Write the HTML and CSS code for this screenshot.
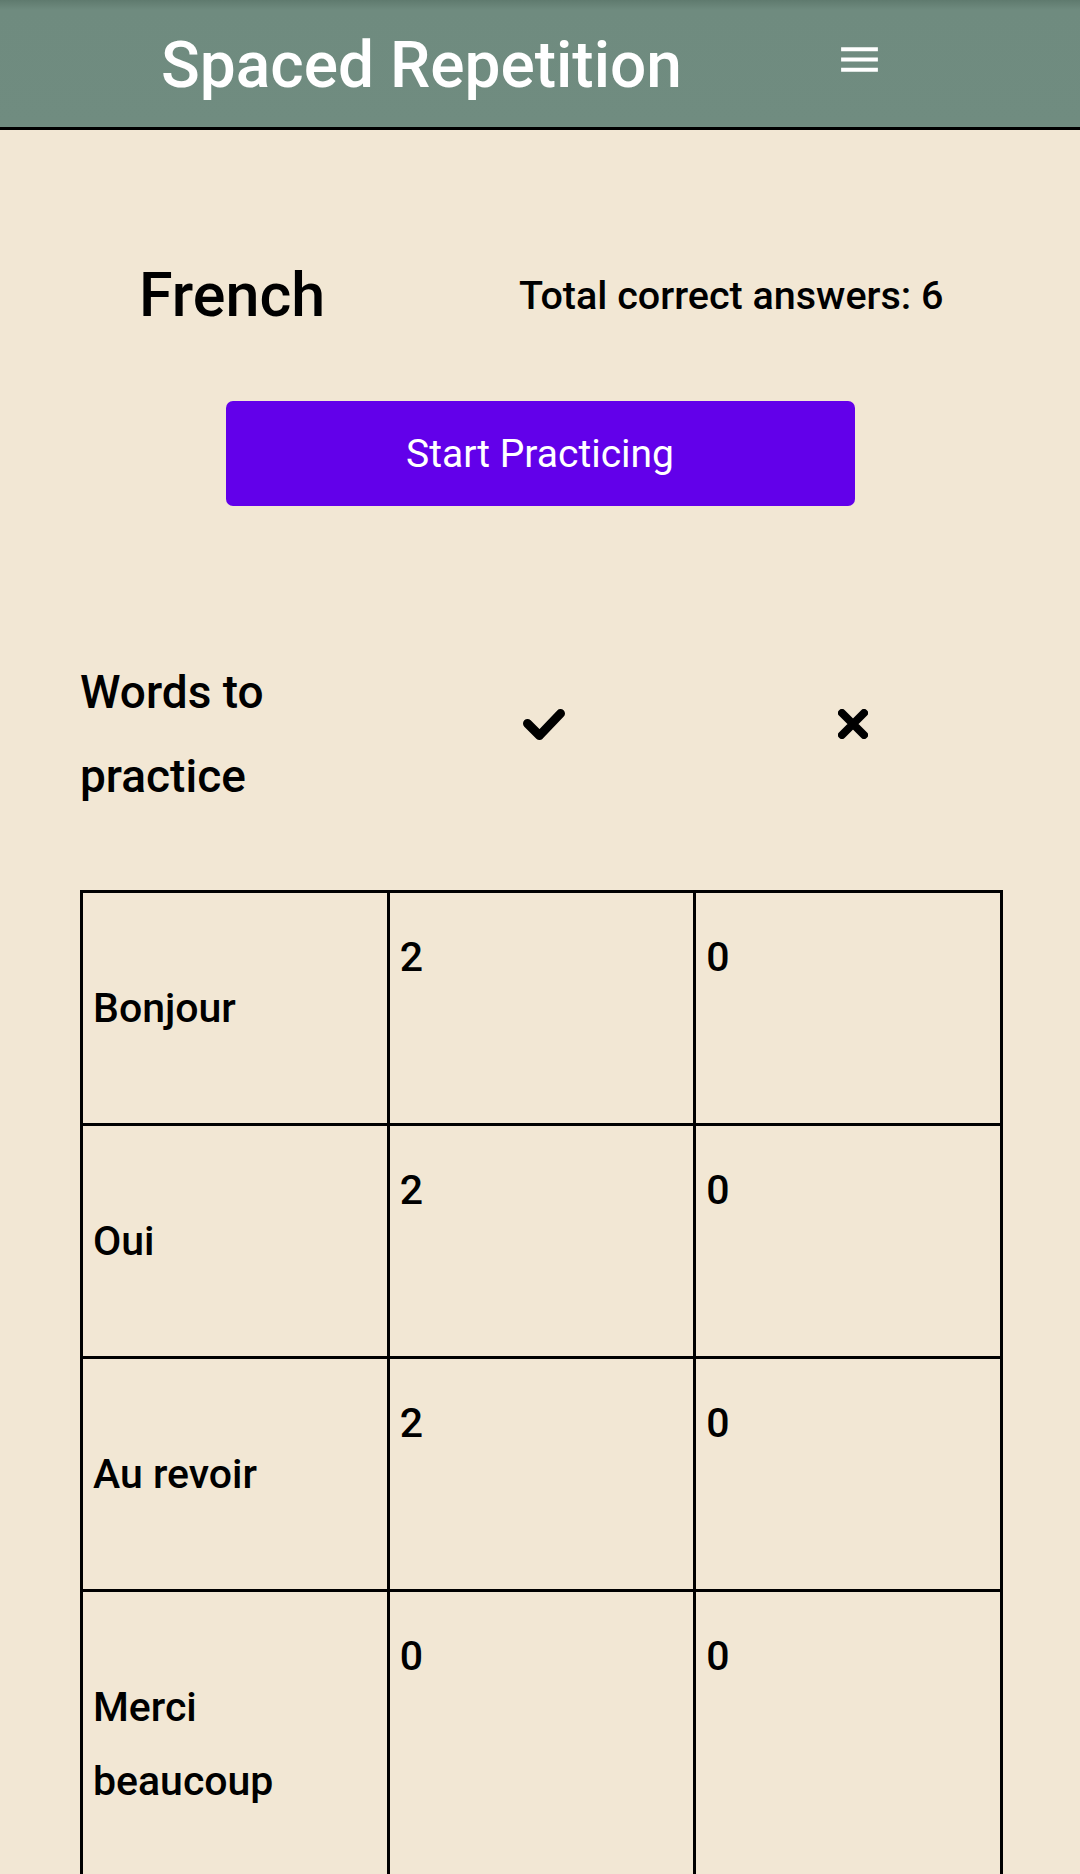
FILE: index.html
```html
<!DOCTYPE html>
<html lang="en">
<head>
<meta charset="utf-8">
<title>Spaced Repetition</title>
<link rel="stylesheet" href="styles.css">
</head>
<body>
<header class="topbar">
  <h1 class="brand">Spaced Repetition</h1>
  <svg class="menu-icon" viewBox="0 0 24 24" width="49" height="49" aria-hidden="true">
    <path d="M3 18h18v-2H3v2zm0-5h18v-2H3v2zm0-7v2h18V6H3z" fill="#ffffff"/>
  </svg>
</header>
<main class="dashboard">
  <section class="lang-row">
    <h2 class="lang-name">French</h2>
    <p class="total">Total correct answers: 6</p>
  </section>
  <button class="start-btn" type="button">Start Practicing</button>
  <div class="words-head">
    <div class="words-title">Words to<br>practice</div>
    <svg class="icon-check" viewBox="0 0 42 31" width="42" height="31" aria-hidden="true">
      <path d="M4.5 14.5 L16.5 26.5 L37.5 4.5" fill="none" stroke="#000" stroke-width="9" stroke-linecap="round" stroke-linejoin="round"/>
    </svg>
    <svg class="icon-x" viewBox="0 0 30 30" width="30" height="30" aria-hidden="true">
      <path d="M4 4 L26 26 M26 4 L4 26" fill="none" stroke="#000" stroke-width="8" stroke-linecap="round"/>
    </svg>
  </div>
  <table class="word-table">
    <tbody>
      <tr><td class="word">Bonjour</td><td class="num">2</td><td class="num">0</td></tr>
      <tr><td class="word">Oui</td><td class="num">2</td><td class="num">0</td></tr>
      <tr><td class="word">Au revoir</td><td class="num">2</td><td class="num">0</td></tr>
      <tr><td class="word">Merci<br>beaucoup</td><td class="num">0</td><td class="num">0</td></tr>
    </tbody>
  </table>
</main>
</body>
</html>
```
FILE: styles.css
```css
html, body {
  margin: 0;
  padding: 0;
}
body {
  background: #f2e7d4;
  color: #000;
  font-family: Roboto, "Open Sans", "Liberation Sans", sans-serif;
}
.topbar {
  display: flex;
  align-items: center;
  height: 127px;
  padding-left: 161px;
  background: linear-gradient(to bottom, #5f7a6e 0px, #6f8b7f 10px, #708c80 100%);
  border-bottom: 3px solid #000;
}
.brand {
  margin: 4px 0 0 0;
  font-size: 64px;
  font-weight: 500;
  color: #fff;
  line-height: 1.172;
}
.menu-icon {
  display: block;
  align-self: flex-start;
  margin-top: 35px;
  margin-left: auto;
  margin-right: 196px;
}
.dashboard {
  display: flex;
  flex-direction: column;
}
.lang-row {
  display: grid;
  grid-template-columns: 380px auto;
  align-items: center;
  margin-top: 130px;
  padding-left: 139px;
}
.lang-name {
  margin: 0;
  font-size: 61px;
  font-weight: 500;
  line-height: 1.172;
}
.total {
  margin: 0;
  font-size: 39.5px;
  font-weight: 500;
  line-height: 1.172;
}
.start-btn {
  align-self: center;
  width: 629px;
  height: 105px;
  margin-top: 70px;
  border: 0;
  border-radius: 7px;
  background: #6200ea;
  color: #fff;
  font-family: Roboto, sans-serif;
  font-size: 39px;
  font-weight: 400;
  padding: 0;
}
.words-head {
  display: grid;
  grid-template-columns: repeat(3, 1fr);
  align-items: center;
  width: 923px;
  margin: 144px 0 0 80px;
}
.words-title {
  font-size: 46px;
  font-weight: 500;
  line-height: 84px;
}
.icon-check {
  justify-self: center;
  margin-bottom: 20px;
  margin-left: 6px;
}
.icon-x {
  justify-self: center;
  margin-bottom: 20px;
  margin-left: 8px;
}
.word-table {
  width: 923px;
  margin: 72px 0 0 80px;
  border-collapse: collapse;
  table-layout: fixed;
}
.word-table td {
  border: 3px solid #000;
  font-size: 41px;
  font-weight: 500;
  line-height: 74px;
  padding-left: 10px;
  padding-right: 10px;
}
.word-table td.word {
  vertical-align: middle;
  padding-top: 78px;
  padding-bottom: 78px;
}
.word-table td.num {
  vertical-align: top;
  padding-top: 27px;
}
```
